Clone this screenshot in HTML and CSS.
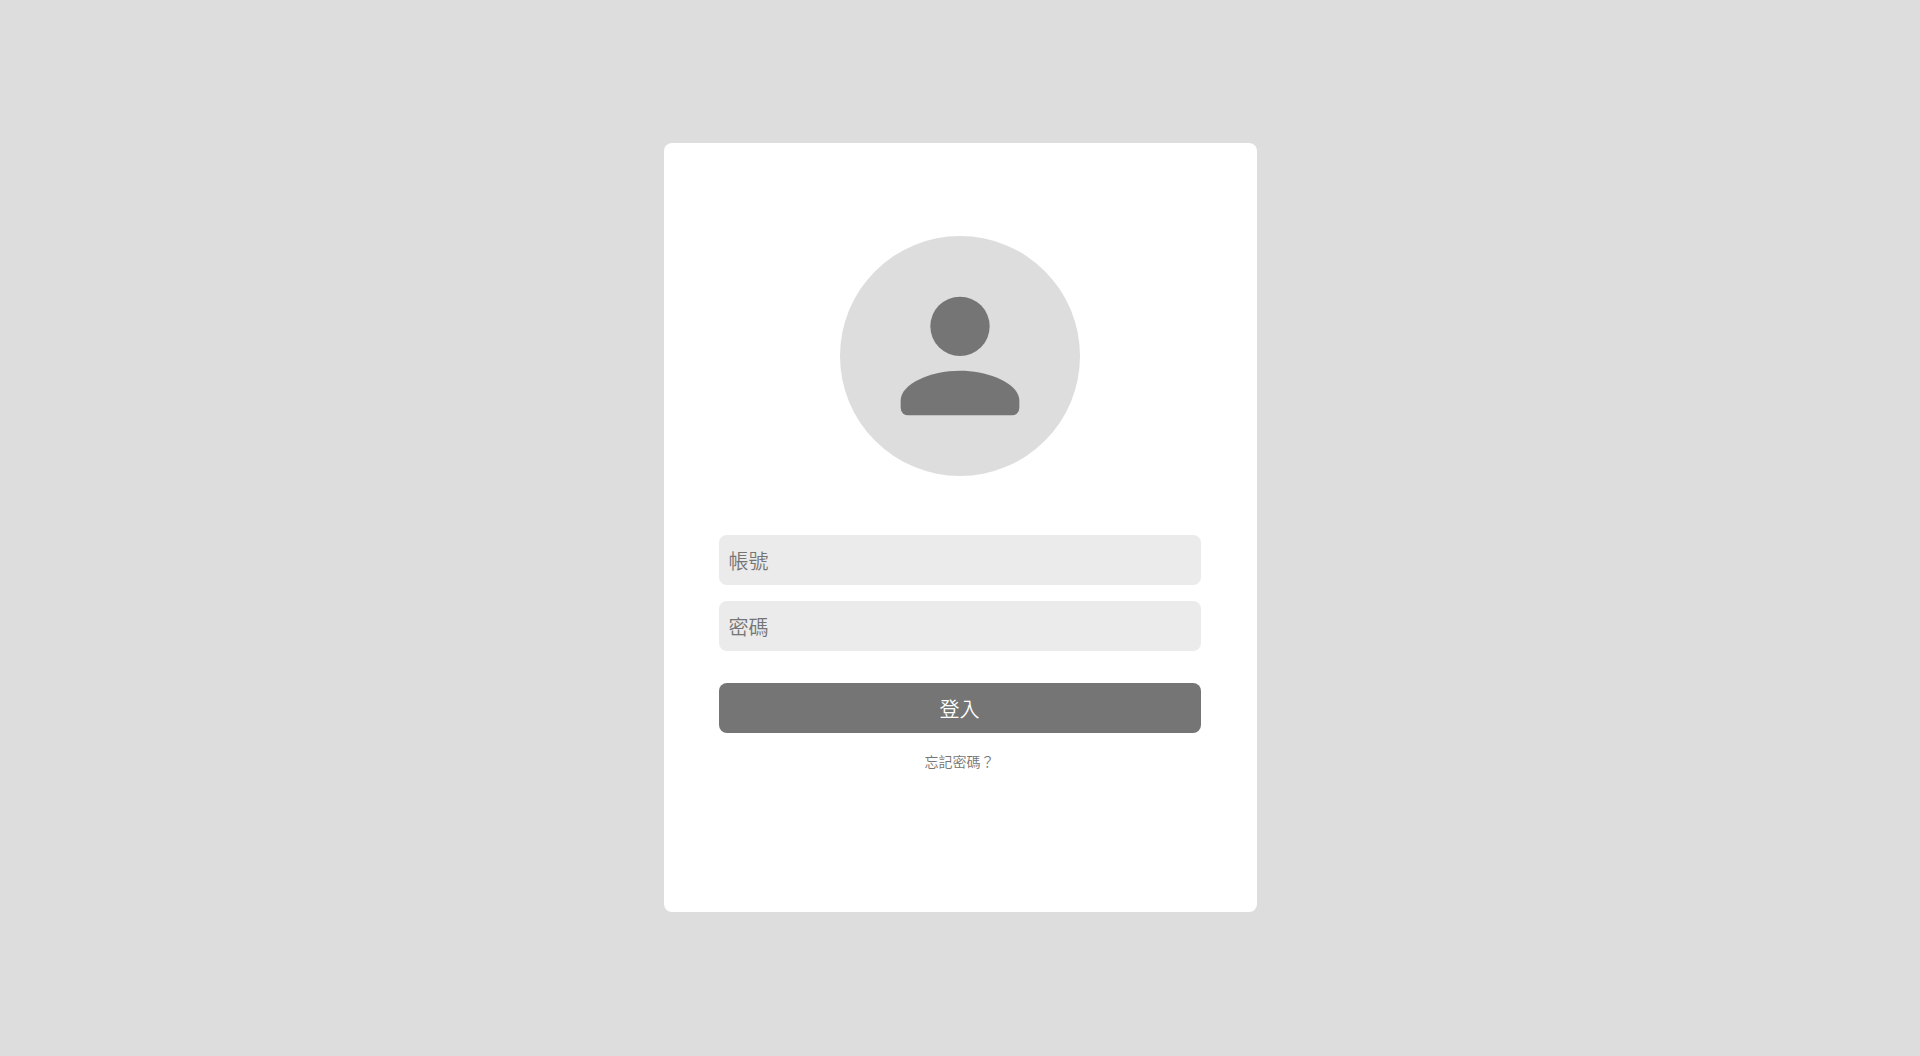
FILE: index.html
```html
<!DOCTYPE html>
<html lang="zh-Hant">
<head>
<meta charset="utf-8">
<meta name="viewport" content="width=device-width, initial-scale=1">
<title>登入</title>
<link rel="stylesheet" href="styles.css">
</head>
<body>
<main class="card">
  <div class="avatar">
    <svg class="avatar-icon" viewBox="0 0 24 24" aria-hidden="true">
      <circle cx="12" cy="8" r="4"/>
      <path d="M4 18C4 15.8 8 14 12 14S20 15.8 20 18V19A1 1 0 0 1 19 20H5A1 1 0 0 1 4 19Z"/>
    </svg>
  </div>
  <form class="form">
    <input class="field" type="text" name="account" aria-label="帳號" placeholder="帳號">
    <input class="field" type="password" name="password" aria-label="密碼" placeholder="密碼">
    <button class="submit" type="submit">登入</button>
  </form>
  <a class="forgot" href="#">忘記密碼？</a>
</main>
</body>
</html>
```
FILE: styles.css
```css
* {
  box-sizing: border-box;
}

body {
  margin: 0;
  min-height: 100vh;
  padding-bottom: 2px;
  display: flex;
  align-items: center;
  justify-content: center;
  background: #ddd;
  color: #757575;
  font-family: "Noto Sans CJK TC", sans-serif;
  font-weight: 350;
}

.card {
  width: 100%;
  max-width: 593px;
  padding: 93px 56px 141px 55px;
  display: flex;
  flex-direction: column;
  align-items: center;
  background: #fff;
  border-radius: 8px;
}

.avatar {
  width: 240px;
  height: 240px;
  display: flex;
  align-items: center;
  justify-content: center;
  background: #ddd;
  border-radius: 50%;
}

.avatar-icon {
  width: 178px;
  height: 178px;
  fill: #757575;
}

.form {
  width: 100%;
  margin-top: 59px;
  display: flex;
  flex-direction: column;
  gap: 16px;
}

.field,
.submit {
  width: 100%;
  height: 50px;
  padding: 2px 10px 0;
  border: 0;
  border-radius: 8px;
  font: inherit;
  font-size: 20px;
}

.field {
  background: #ebebeb;
}

.field::placeholder {
  color: #757575;
}

.submit {
  margin-top: 16px;
  background: #757575;
  color: #fff;
}

.forgot {
  margin-top: 18px;
  color: #757575;
  font-size: 14px;
  line-height: 20px;
  text-decoration: none;
}
```
